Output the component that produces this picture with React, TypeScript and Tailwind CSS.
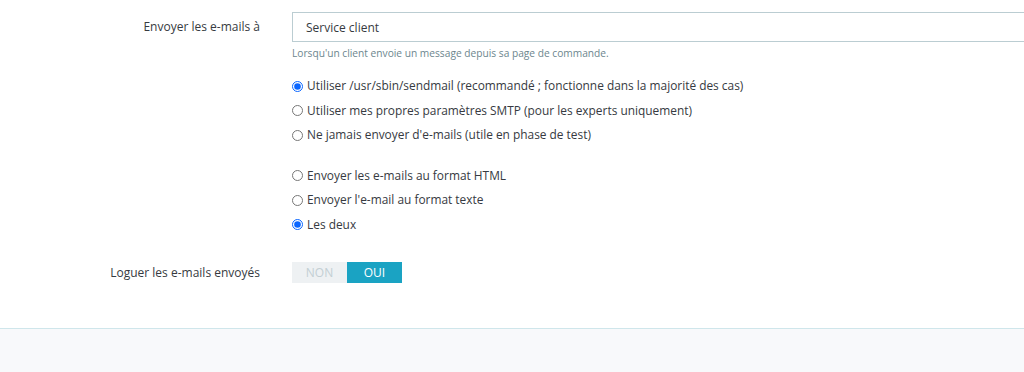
import React, { useState } from "react"

const Radio = ({ name, checked, label, onChange }: { name: string; checked: boolean; label: string; onChange: () => void }) => (
  <label className="flex items-center h-[24.5px] text-[11.9px] text-[#363a41] cursor-pointer">
    <input
      type="radio"
      name={name}
      checked={checked}
      onChange={onChange}
      className="w-[11px] h-[11px] m-0 mr-[4px] accent-[#0a66ff]"
    />
    {label}
  </label>
)

export default function App() {
  const [mode, setMode] = useState(0)
  const [format, setFormat] = useState(2)
  const [log, setLog] = useState(true)

  const modes = [
    "Utiliser /usr/sbin/sendmail (recommandé ; fonctionne dans la majorité des cas)",
    "Utiliser mes propres paramètres SMTP (pour les experts uniquement)",
    "Ne jamais envoyer d'e-mails (utile en phase de test)",
  ]
  const formats = [
    "Envoyer les e-mails au format HTML",
    "Envoyer l'e-mail au format texte",
    "Les deux",
  ]

  return (
    <div className="w-[1024px] h-[372px] overflow-hidden bg-white flex flex-col" style={{ fontFamily: '"Open Sans", "Noto Sans", sans-serif' }}>
      <div className="h-[328px] pt-[12px]">
        <div className="flex items-start">
          <div className="w-[260px] shrink-0 text-right text-[12px] text-[#363a41] leading-[30px]">Envoyer les e-mails à</div>
          <div className="ml-[32px] flex-1">
            <input
              type="text"
              defaultValue="Service client"
              className="w-[740px] h-[30px] border border-[#bbcdd2] px-[13px] text-[12px] text-[#363a41] outline-none"
            />
            <p className="text-[10.2px] text-[#6c868e] mt-[3px] leading-[16px]">
              Lorsqu'un client envoie un message depuis sa page de commande.
            </p>
            <div className="mt-[13px] flex flex-col">
              {modes.map((m, i) => (
                <Radio key={i} name="mode" checked={mode === i} label={m} onChange={() => setMode(i)} />
              ))}
            </div>
            <div className="mt-[16px] flex flex-col">
              {formats.map((f, i) => (
                <Radio key={i} name="format" checked={format === i} label={f} onChange={() => setFormat(i)} />
              ))}
            </div>
          </div>
        </div>
        <div className="flex items-center mt-[25px]">
          <div className="w-[260px] shrink-0 text-right text-[12px] text-[#363a41]">Loguer les e-mails envoyés</div>
          <div className="ml-[32px] flex h-[21px] w-[110px] text-[12px]">
            <button
              onClick={() => setLog(false)}
              className={`flex-1 flex items-center justify-center ${log ? "bg-[#eef1f3] text-[#c3cfd3]" : "bg-[#1aa3c3] text-white"}`}
            >
              NON
            </button>
            <button
              onClick={() => setLog(true)}
              className={`flex-1 flex items-center justify-center ${log ? "bg-[#1aa3c3] text-white" : "bg-[#eef1f3] text-[#c3cfd3]"}`}
            >
              OUI
            </button>
          </div>
        </div>
      </div>
      <div className="flex-1 border-t border-[#cfe6eb] bg-[#f8f9fb]" />
    </div>
  )
}
